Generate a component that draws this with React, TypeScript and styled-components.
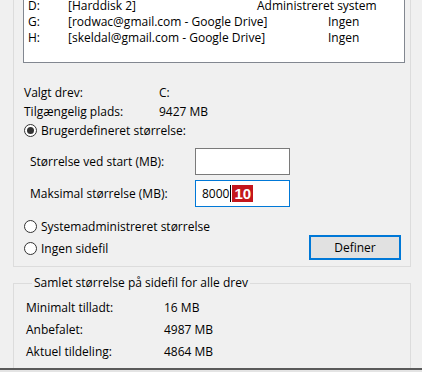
import React from "react";
import styled, { createGlobalStyle } from "styled-components";

const GlobalStyle = createGlobalStyle`
  html, body { margin: 0; padding: 0; background: #f0f0f0; }
  body {
    font-family: "Open Sans", "Noto Sans", "Liberation Sans", sans-serif;
    font-size: 12px;
    color: #000;
  }
`;

const Page = styled.div`
  width: 422px;
  height: 372px;
  display: flex;
  flex-direction: column;
  background: #f0f0f0;
  overflow: hidden;
`;

const Content = styled.div`
  height: 368px;
  overflow: hidden;
  display: flex;
  flex-direction: column;
`;

const Edge = styled.div`
  height: 2px;
  background: #5a5a5a;
  flex: none;
`;

const EdgeLight = styled.div`
  height: 2px;
  background: #e4e4e4;
  flex: none;
`;

const Group = styled.div`
  margin: -20px 11px 0 13px;
  border: 1px solid #dcdcdc;
  display: flex;
  flex-direction: column;
  padding-bottom: 9px;
`;

const ListBox = styled.div`
  margin: 16px 5px 0 9px;
  border: 1px solid #828790;
  background: #fff;
  padding-bottom: 16px;
`;

const ListRow = styled.div`
  display: grid;
  grid-template-columns: 40px 189px 1fr;
  height: 16px;
  line-height: 16px;
  padding-left: 4px;
  white-space: nowrap;
`;

const Status = styled.span<{ $indent: number }>`
  padding-left: ${(p) => p.$indent}px;
`;

const InfoGrid = styled.div`
  margin-top: 20px;
  padding-left: 10px;
  display: grid;
  grid-template-columns: 135px auto;
  grid-auto-rows: 19px;
  line-height: 19px;
`;

const RadioRow = styled.div<{ $row?: number }>`
  display: flex;
  align-items: center;
  gap: 4px;
  height: 18px;
  padding-left: 10px;
  white-space: nowrap;
  grid-column: 1;
  grid-row: ${(p) => p.$row ?? "auto"};
`;

const RadioCircle = styled.span<{ $checked?: boolean }>`
  width: 11px;
  height: 11px;
  border: 1px solid #333;
  border-radius: 50%;
  background: #fff;
  display: flex;
  align-items: center;
  justify-content: center;
  flex: none;
  &::after {
    content: "";
    display: ${(p) => (p.$checked ? "block" : "none")};
    width: 7px;
    height: 7px;
    border-radius: 50%;
    background: #333;
  }
`;

const FieldRow = styled.div<{ $gap: number }>`
  display: flex;
  align-items: center;
  margin-top: ${(p) => p.$gap}px;
  padding-left: 16px;
`;

const FieldLabel = styled.span`
  width: 165px;
  flex: none;
`;

const InputBox = styled.div<{ $focused?: boolean }>`
  width: 87px;
  height: 25px;
  border: 1px solid ${(p) => (p.$focused ? "#0078d7" : "#7a7a7a")};
  background: #fff;
  display: flex;
  align-items: center;
  padding-left: 6px;
`;

const Caret = styled.span`
  width: 1px;
  height: 17px;
  background: #000;
  margin: 0 1px;
`;

const Badge = styled.span`
  background: #c4161c;
  color: #fff;
  font-family: "Liberation Sans", "Open Sans", sans-serif;
  font-weight: 700;
  font-size: 15px;
  line-height: 17px;
  padding: 0 2px;
`;

const BottomArea = styled.div`
  margin-top: 10px;
  display: grid;
  grid-template-columns: 1fr 92px;
  grid-template-rows: 18px 18px;
  row-gap: 4px;
  padding-right: 9px;
`;

const SetButton = styled.div`
  grid-column: 2;
  grid-row: 2;
  align-self: center;
  margin-top: -2px;
  height: 21px;
  border: 2px solid #0078d7;
  background: #e1e1e1;
  display: flex;
  align-items: center;
  justify-content: center;
`;

const TotalGroup = styled.fieldset`
  margin: 8px 11px 0 13px;
  border: 1px solid #dcdcdc;
  padding: 6px 0 10px 12px;
  min-width: 0;
`;

const Legend = styled.legend`
  margin-left: 6px;
  padding: 0 2px;
  line-height: 16px;
`;

const TotalGrid = styled.div`
  display: grid;
  grid-template-columns: 138px auto;
  grid-auto-rows: 22px;
  line-height: 22px;
`;

const drives = [
  { letter: "D:", name: "[Harddisk 2]", status: "Administreret system", indent: 0 },
  { letter: "G:", name: "[rodwac@gmail.com - Google Drive]", status: "Ingen", indent: 71 },
  { letter: "H:", name: "[skeldal@gmail.com - Google Drive]", status: "Ingen", indent: 71 },
];

const totals = [
  ["Minimalt tilladt:", "16 MB"],
  ["Anbefalet:", "4987 MB"],
  ["Aktuel tildeling:", "4864 MB"],
];

export default function App() {
  return (
    <Page>
      <GlobalStyle />
      <Content>
        <Group>
          <ListBox>
            {drives.map((d) => (
              <ListRow key={d.letter}>
                <span>{d.letter}</span>
                <span>{d.name}</span>
                <Status $indent={d.indent}>{d.status}</Status>
              </ListRow>
            ))}
          </ListBox>
          <InfoGrid>
            <span>Valgt drev:</span>
            <span>C:</span>
            <span>Tilgængelig plads:</span>
            <span>9427 MB</span>
          </InfoGrid>
          <RadioRow>
            <RadioCircle $checked />
            <span>Brugerdefineret størrelse:</span>
          </RadioRow>
          <FieldRow $gap={9}>
            <FieldLabel>Størrelse ved start (MB):</FieldLabel>
            <InputBox />
          </FieldRow>
          <FieldRow $gap={5}>
            <FieldLabel>Maksimal størrelse (MB):</FieldLabel>
            <InputBox $focused>
              <span>8000</span>
              <Caret />
              <Badge>10</Badge>
            </InputBox>
          </FieldRow>
          <BottomArea>
            <RadioRow $row={1}>
              <RadioCircle />
              <span>Systemadministreret størrelse</span>
            </RadioRow>
            <RadioRow $row={2}>
              <RadioCircle />
              <span>Ingen sidefil</span>
            </RadioRow>
            <SetButton>Definer</SetButton>
          </BottomArea>
        </Group>
        <TotalGroup>
          <Legend>Samlet størrelse på sidefil for alle drev</Legend>
          <TotalGrid>
            {totals.map(([k, v]) => (
              <React.Fragment key={k}>
                <span>{k}</span>
                <span>{v}</span>
              </React.Fragment>
            ))}
          </TotalGrid>
        </TotalGroup>
      </Content>
      <Edge />
      <EdgeLight />
    </Page>
  );
}
